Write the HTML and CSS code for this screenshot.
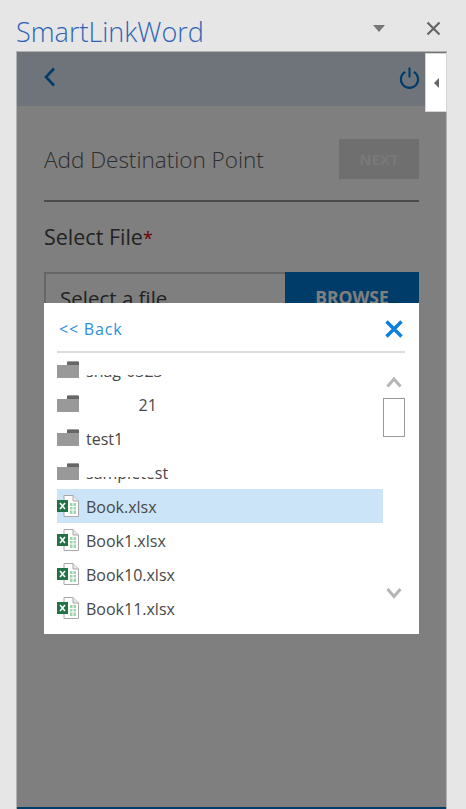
FILE: index.html
```html
<!DOCTYPE html>
<html>
<head>
<meta charset="UTF-8">
  <link rel="stylesheet" href="styles.css">
  <title>SmartLinkWord</title>
</head>
<body>
<svg class="defs" width="0" height="0">
  <symbol id="folder" viewBox="0 0 22 18">
    <path d="M0 4H10V1.5Q10 .5 11 .5H21Q22 .5 22 1.5V17H0Z" fill="#999"/>
    <path d="M10 4V1.5Q10 .5 11 .5H21Q22 .5 22 1.5V4Z" fill="#666"/>
  </symbol>
  <symbol id="xlsx" viewBox="0 0 22 22">
    <path d="M7 .5H16L21.5 6V21.5H7Z" fill="#fff" stroke="#a8a8a8"/>
    <path d="M16 .5V6H21.5" fill="#e8e8e8" stroke="#a8a8a8"/>
    <path d="M13 8H19V19H13Z" fill="#9fd3ae"/>
    <path d="M13 11.5H19M13 15H19M16 8V19" stroke="#fff"/>
    <rect x="0" y="5" width="11" height="12" fill="#217346"/>
    <path d="M3 8L8 14M8 8L3 14" stroke="#fff" stroke-width="1.6"/>
  </symbol>
</svg>
<div class="titlebar">
  <span class="app-title">SmartLinkWord</span>
  <span class="title-actions">
    <span class="drop"></span>
    <svg class="close" width="15" height="15" viewBox="0 0 15 15"><path d="M1.5 1.5L13.5 13.5M13.5 1.5L1.5 13.5" stroke="#666" stroke-width="2.2" fill="none"/></svg>
  </span>
</div>
<div class="pane">
  <div class="topbar">
    <svg width="13" height="20" viewBox="0 0 13 20"><path d="M11 1.5L3 10L11 18.5" stroke="#0078d4" stroke-width="2.6" fill="none"/></svg>
    <svg width="21" height="22" viewBox="0 0 22 22"><path d="M6.5 4.6A9 9 0 1 0 15.5 4.6M11 0V10.5" stroke="#0078d4" stroke-width="2.2" fill="none"/></svg>
  </div>
  <div class="content">
    <div class="head-row">
      <h1>Add Destination Point</h1>
      <button class="next">NEXT</button>
    </div>
    <hr>
    <div class="field-label">Select File<span class="req">*</span></div>
    <div class="file-input">
      <span class="file-text">Select a file</span>
      <button class="browse">BROWSE</button>
    </div>
  </div>
  <div class="footer-line"></div>
  <div class="overlay"></div>
  <div class="handle"><span class="handle-arrow"></span></div>
  <div class="modal">
    <div class="modal-head">
      <a class="back">&lt;&lt; Back</a>
      <svg width="20" height="20" viewBox="0 0 20 20"><path d="M2.5 2.5L17.5 17.5M17.5 2.5L2.5 17.5" stroke="#0a7fe0" stroke-width="3.4" fill="none"/></svg>
    </div>
    <div class="browser">
      <ul class="files">
        <li class="row"><svg class="ico"><use href="#folder"/></svg><span class="name">snag-0323<i class="mask m1"></i></span></li>
        <li class="row"><svg class="ico"><use href="#folder"/></svg><span class="name">Group-21<i class="mask m2"></i></span></li>
        <li class="row"><svg class="ico"><use href="#folder"/></svg><span class="name">test1</span></li>
        <li class="row"><svg class="ico"><use href="#folder"/></svg><span class="name">sampletest<i class="mask m3"></i></span></li>
        <li class="row selected"><svg class="ico"><use href="#xlsx"/></svg><span class="name">Book.xlsx</span></li>
        <li class="row"><svg class="ico"><use href="#xlsx"/></svg><span class="name">Book1.xlsx</span></li>
        <li class="row"><svg class="ico"><use href="#xlsx"/></svg><span class="name">Book10.xlsx</span></li>
        <li class="row"><svg class="ico"><use href="#xlsx"/></svg><span class="name">Book11.xlsx</span></li>
      </ul>
      <div class="scroll">
        <svg class="chev" width="16" height="13" viewBox="0 0 16 13"><path d="M1.5 10.5L8 3L14.5 10.5" stroke="#b5b5b5" stroke-width="3" fill="none"/></svg>
        <div class="thumb"></div>
        <svg class="chev down" width="16" height="12" viewBox="0 0 16 12"><path d="M1.5 2L8 9.5L14.5 2" stroke="#b5b5b5" stroke-width="3" fill="none"/></svg>
      </div>
    </div>
  </div>
</div>
</body>
</html>
```

FILE: styles.css
```css
* {
  box-sizing: border-box;
}
html, body {
  height: 100%;
}
body {
  margin: 0;
  background-color: #e6e6e6;
  font-family: "Open Sans", "Noto Sans", sans-serif;
  overflow: hidden;
}
.defs {
  position: absolute;
}
.titlebar {
  height: 51px;
  padding: 14px 25px 0 16px;
  display: flex;
  justify-content: space-between;
}
.app-title {
  font-size: 27px;
  font-weight: 300;
  line-height: 36px;
  color: #2f64b4;
}
.title-actions {
  display: flex;
  gap: 41px;
  padding-top: 7px;
}
.drop {
  width: 0;
  height: 0;
  margin-top: 4px;
  border-left: 6.5px solid transparent;
  border-right: 6.5px solid transparent;
  border-top: 7px solid #777;
}
.pane {
  position: relative;
  margin-left: 16px;
  width: 431px;
  height: 758px;
  background-color: #fff;
  border: 1px solid #b2b2b2;
  border-bottom: none;
}
.topbar {
  height: 54px;
  padding: 15px 26px 0 26px;
  display: flex;
  justify-content: space-between;
  background-color: #dde8f4;
}
.content {
  padding: 33px 27px 0 27px;
}
.head-row {
  display: flex;
  justify-content: space-between;
  align-items: center;
}
h1 {
  margin: 0;
  font-size: 22.5px;
  font-weight: 300;
  color: #5c5c5c;
}
.next {
  width: 80px;
  height: 40px;
  border: none;
  background-color: #dedede;
  color: #f2f2f2;
  font-family: inherit;
  font-size: 15px;
  font-weight: 700;
}
hr {
  margin: 21px 0 0;
  border: none;
  height: 2px;
  background-color: #969696;
}
.field-label {
  margin-top: 19px;
  font-size: 21.5px;
  line-height: 32px;
  color: #444;
}
.req {
  color: #e00000;
  font-size: 18px;
}
.file-input {
  margin-top: 18px;
  height: 50px;
  display: flex;
  justify-content: space-between;
  border: 2px solid #ccc;
  border-right: none;
}
.file-text {
  padding: 10px 0 0 14px;
  font-size: 20.5px;
  color: #444;
}
.browse {
  width: 134px;
  margin-top: -2px;
  height: 50px;
  border: none;
  background-color: #0078d4;
  color: #fff;
  font-family: inherit;
  font-size: 17.5px;
  font-weight: 700;
}
.footer-line {
  position: absolute;
  left: 0;
  right: 0;
  bottom: 0;
  height: 2px;
  background-color: #0078d4;
}
.overlay {
  position: absolute;
  inset: 0;
  background-color: rgba(0, 0, 0, 0.5);
}
.handle {
  position: absolute;
  top: 1px;
  right: -1px;
  width: 22px;
  height: 59px;
  background-color: #fff;
  border: 1px solid #d5d5d5;
  display: flex;
  align-items: center;
  justify-content: center;
}
.handle-arrow {
  width: 0;
  height: 0;
  border-top: 5px solid transparent;
  border-bottom: 5px solid transparent;
  border-right: 5px solid #666;
}
.modal {
  position: absolute;
  left: 27px;
  top: 251px;
  width: 375px;
  height: 331px;
  padding: 0 14px 0 13px;
  background-color: #fff;
}
.modal-head {
  height: 50px;
  display: flex;
  justify-content: space-between;
  align-items: center;
  padding: 4px 0 0 2px;
  border-bottom: 2px solid #dcdcdc;
}
.modal-head svg {
  margin-right: 1px;
}
.back {
  font-size: 16px;
  letter-spacing: 0.8px;
  color: #2b8fe3;
}
.browser {
  display: flex;
  height: 279px;
}
.files {
  list-style: none;
  margin: 0;
  padding: 0;
  flex: 1;
}
.row {
  height: 34px;
  display: flex;
  align-items: center;
  gap: 7px;
  font-size: 16px;
  color: #484848;
}
.selected {
  background-color: #cce4f7;
}
.ico {
  width: 22px;
  height: 22px;
}
.name {
  position: relative;
  padding-top: 2px;
}
.mask {
  position: absolute;
  background-color: #fff;
  left: -2px;
  top: 0;
}
.m1 {
  right: -2px;
  height: 17px;
}
.m2 {
  width: 55px;
  height: 26px;
}
.m3 {
  right: 14px;
  height: 17px;
}
.scroll {
  width: 22px;
  display: flex;
  flex-direction: column;
  align-items: center;
}
.chev {
  margin-top: 23px;
  flex-shrink: 0;
}
.thumb {
  width: 22px;
  height: 39px;
  margin-top: 9px;
  border: 1.5px solid #999;
}
.down {
  margin-top: 150px;
}
```
